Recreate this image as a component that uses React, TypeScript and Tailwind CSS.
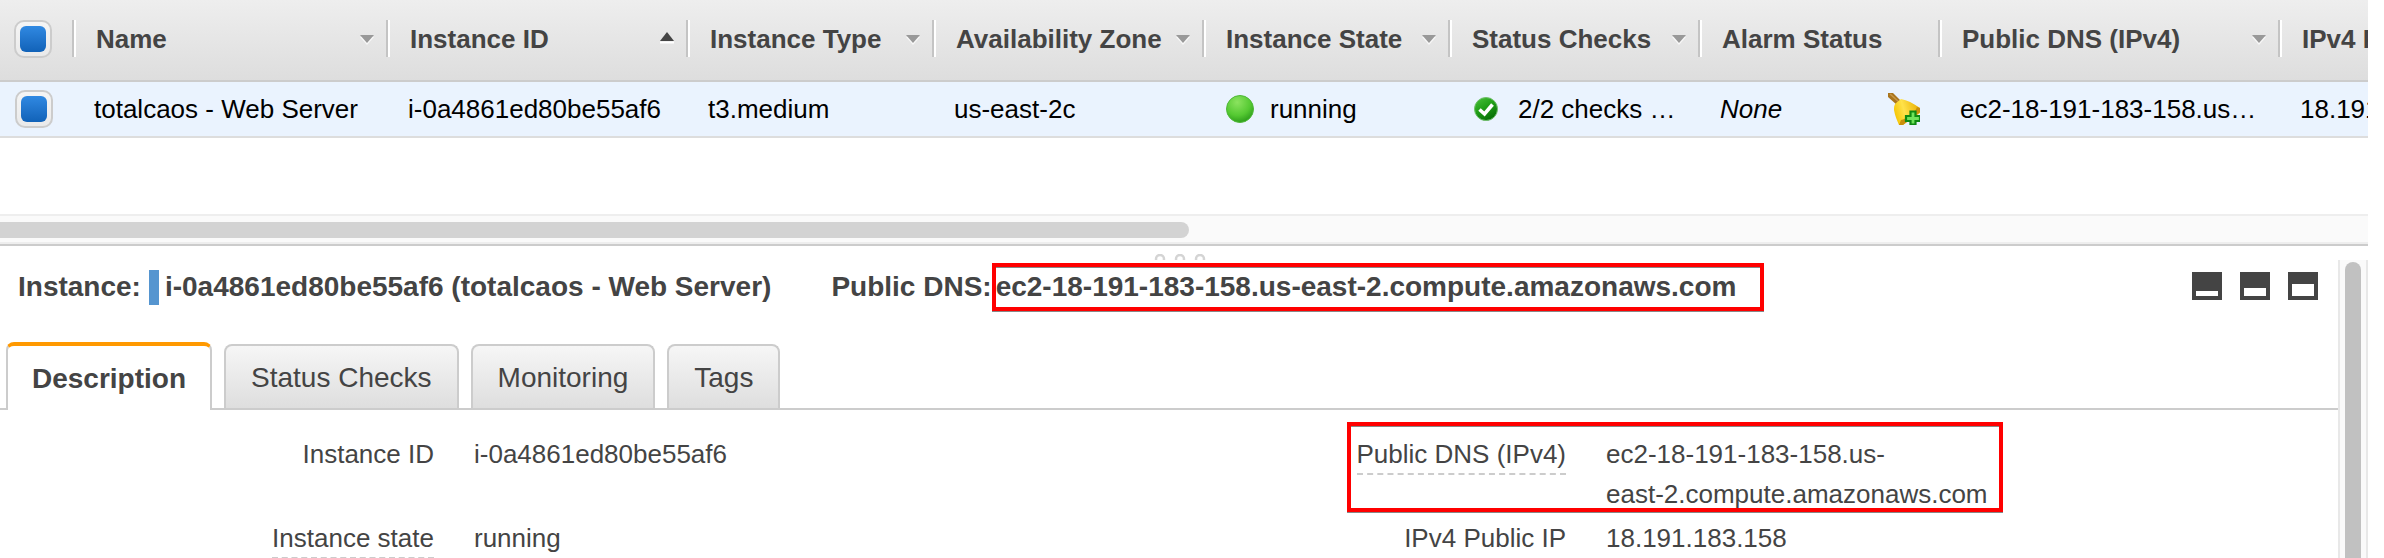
import type { ReactNode } from "react";

type SortDirection = "asc" | "none";

function SortArrow({ direction }: { direction: SortDirection }) {
  if (direction === "asc") {
    return (
      <svg width="14" height="14" viewBox="0 0 14 14" aria-hidden="true" className="shrink-0">
        <path d="M0 9.500H14V11.500H0Z" fill="#fff" />
        <path d="M7 0L14 9H0Z" fill="#444" />
      </svg>
    );
  }
  return (
    <svg width="14" height="12" viewBox="0 0 14 12" aria-hidden="true" className="shrink-0">
      <path d="M0 4H14L7 12Z" fill="#f8f8f8" />
      <path d="M0 2H14L7 10Z" fill="#999" />
    </svg>
  );
}

function Checkbox({ label }: { label: string }) {
  return (
    <input
      type="checkbox"
      defaultChecked
      aria-label={label}
      className="block size-[38px] appearance-none rounded-[10px] border-2 border-[#ccc] bg-linear-to-b from-[#f5f5f5] to-[#eaeaea] p-1 before:block before:size-[26px] before:rounded-md before:content-[''] checked:before:bg-linear-to-b checked:before:from-[#3089e2] checked:before:to-[#1162b8]"
    />
  );
}

function HeaderCell({ children, sort }: { children: ReactNode; sort?: SortDirection }) {
  return (
    <th className="h-20 overflow-hidden pt-5 text-left align-top font-bold">
      <div className="h-[37px] border-l-2 border-[#c4c4c4] shadow-[inset_2px_0_0_#fff]">
        <button
          type="button"
          className="flex h-full w-full items-center justify-between pr-3 pl-[22px] whitespace-nowrap"
        >
          <span>{children}</span>
          {sort && <SortArrow direction={sort} />}
        </button>
      </div>
    </th>
  );
}

function Cell({ children }: { children: ReactNode }) {
  return (
    <td className="overflow-hidden pb-0.5 pl-[22px] align-middle whitespace-nowrap">{children}</td>
  );
}

function RunningIcon() {
  return (
    <svg width="28" height="28" viewBox="0 0 28 28" aria-hidden="true" className="shrink-0">
      <defs>
        <radialGradient id="run" cx="0.4" cy="0.25" r="0.75">
          <stop offset="0" stopColor="#8be35f" />
          <stop offset="0.65" stopColor="#55c932" />
          <stop offset="1" stopColor="#2fa01c" />
        </radialGradient>
      </defs>
      <circle cx="14" cy="14" r="13.500" fill="url(#run)" stroke="#4fb838" strokeWidth="1" />
    </svg>
  );
}

function PassedIcon() {
  return (
    <svg width="24" height="24" viewBox="0 0 24 24" aria-hidden="true" className="shrink-0">
      <defs>
        <linearGradient id="pass" x1="0" y1="0" x2="0.6" y2="1">
          <stop offset="0" stopColor="#4cc23c" />
          <stop offset="0.5" stopColor="#22a018" />
          <stop offset="1" stopColor="#067006" />
        </linearGradient>
      </defs>
      <circle cx="12" cy="12" r="11.500" fill="url(#pass)" stroke="#6fbf6a" strokeWidth="1" />
      <path d="M5.500 12.500L10.500 17L18.500 7.500" fill="none" stroke="#fff" strokeWidth="3.600" />
    </svg>
  );
}

function AlarmBellIcon() {
  return (
    <svg width="32" height="32" viewBox="0 0 32 32" aria-hidden="true">
      <defs>
        <linearGradient id="bell" x1="0" y1="0.6" x2="1" y2="0.3">
          <stop offset="0" stopColor="#f5c400" />
          <stop offset="0.4" stopColor="#ffe24a" />
          <stop offset="1" stopColor="#e9ae00" />
        </linearGradient>
      </defs>
      <path d="M0 0H5L13 8L9 12L0 4Z" fill="#a9741c" />
      <path d="M2 1L11 9" stroke="#c8984a" strokeWidth="1.500" />
      <path d="M8 10L13 6C19 7 25 10 32 15V20L15 32H11C9 27 7 23 6 17C6 14 6 12 8 10Z" fill="url(#bell)" />
      <path d="M32 15V19L15 32H11L13 27C18 26 27 21 29 14Z" fill="#c98f0c" />
      <path
        d="M22.500 18.500H27.500V23H32V28H27.500V31.500H22.500V28H18V23H22.500Z"
        fill="#6fe35a"
        stroke="#0f8a12"
        strokeWidth="2.200"
      />
    </svg>
  );
}

function InstanceTable() {
  return (
    <table className="w-full table-fixed border-collapse">
      <colgroup>
        <col className="w-[72px]" />
        <col className="w-[314px]" />
        <col className="w-[300px]" />
        <col className="w-[246px]" />
        <col className="w-[270px]" />
        <col className="w-[246px]" />
        <col className="w-[250px]" />
        <col className="w-[240px]" />
        <col className="w-[340px]" />
        <col />
      </colgroup>
      <thead>
        <tr className="h-[82px] bg-linear-to-b from-[#eee] to-[#ddd] text-[#444] shadow-[inset_0_-2px_0_#ccc]">
          <th className="pt-5 pl-[14px] align-top">
            <Checkbox label="Select all instances" />
          </th>
          <HeaderCell sort="none">Name</HeaderCell>
          <HeaderCell sort="asc">Instance ID</HeaderCell>
          <HeaderCell sort="none">Instance Type</HeaderCell>
          <HeaderCell sort="none">Availability Zone</HeaderCell>
          <HeaderCell sort="none">Instance State</HeaderCell>
          <HeaderCell sort="none">Status Checks</HeaderCell>
          <HeaderCell>Alarm Status</HeaderCell>
          <HeaderCell sort="none">Public DNS (IPv4)</HeaderCell>
          <HeaderCell>IPv4 Public IP</HeaderCell>
        </tr>
      </thead>
      <tbody>
        <tr className="h-14 bg-[#eaf3fe] text-black shadow-[inset_0_-2px_0_#ddd]">
          <td className="pb-0.5 pl-[15px] align-middle">
            <Checkbox label="Select totalcaos - Web Server" />
          </td>
          <Cell>totalcaos - Web Server</Cell>
          <Cell>i-0a4861ed80be55af6</Cell>
          <Cell>t3.medium</Cell>
          <Cell>us-east-2c</Cell>
          <Cell>
            <span className="flex items-center gap-4 pl-0.5">
              <RunningIcon />
              running
            </span>
          </Cell>
          <Cell>
            <span className="flex items-center gap-5 pl-1">
              <PassedIcon />
              2/2 checks …
            </span>
          </Cell>
          <Cell>
            <span className="flex items-center justify-between pr-[18px]">
              <em>None</em>
              <button type="button" aria-label="Add alarm">
                <AlarmBellIcon />
              </button>
            </span>
          </Cell>
          <Cell>ec2-18-191-183-158.us…</Cell>
          <Cell>18.191.183.158</Cell>
        </tr>
      </tbody>
    </table>
  );
}

function PaneSizeButton({ label, top }: { label: string; top: number }) {
  return (
    <button type="button" aria-label={label}>
      <svg width="30" height="28" viewBox="0 0 30 28" className="block" aria-hidden="true">
        <rect width="30" height="28" fill="#444" />
        <rect x="4" y={top} width="22" height={24 - top} fill="#fff" />
      </svg>
    </button>
  );
}

function SplitterGrip() {
  return (
    <svg width="52" height="6" viewBox="0 0 52 6" aria-hidden="true">
      <g fill="none" stroke="#d4d4d4" strokeWidth="2.500">
        <circle cx="6" cy="5" r="4" />
        <circle cx="26" cy="5" r="4" />
        <circle cx="46" cy="5" r="4" />
      </g>
    </svg>
  );
}

function Tab({ children }: { children: ReactNode }) {
  return (
    <button
      type="button"
      role="tab"
      aria-selected="false"
      className="h-16 rounded-t-lg border-2 border-b-0 border-[#ccc] bg-linear-to-b from-[#f6f6f6] to-[#dedede] px-[25px] pt-0.5"
    >
      {children}
    </button>
  );
}

function Detail({
  label,
  hint,
  highlighted,
  children,
}: {
  label: string;
  hint?: boolean;
  highlighted?: boolean;
  children: ReactNode;
}) {
  return (
    <div className="relative flex gap-10">
      <dt className="flex w-[434px] shrink-0 items-start justify-end">
        <span className={hint ? "h-[41px] border-b-2 border-dashed border-[#ccc]" : ""}>{label}</span>
      </dt>
      <dd className="whitespace-nowrap">{children}</dd>
      {highlighted && (
        <div className="absolute -top-3 left-[215px] h-[90px] w-[656px] border-4 border-[#f00] shadow-[0_1px_0_#888,inset_0_1px_0_#888]" />
      )}
    </div>
  );
}

export default function App() {
  return (
    <div className="flex h-screen flex-col overflow-hidden bg-white pr-4 font-['Liberation_Sans',Arial,sans-serif] text-[26px] leading-[30px]">
      <section aria-label="Instances" className="shrink-0">
        <InstanceTable />
        <div className="mt-[76px] border-y-2 border-[#eee] bg-[#fafafa] pt-1.5 pb-1">
          <div className="h-4 w-[50.2%] rounded-r-lg bg-[#d3d3d3]" />
        </div>
      </section>

      <div className="flex h-4 shrink-0 items-end justify-center border-t-2 border-[#ccc] pr-2">
        <SplitterGrip />
      </div>

      <section aria-label="Instance details" className="flex min-h-0 flex-1 text-[#444]">
        <div className="min-w-0 flex-1 overflow-hidden">
          <header className="flex items-start justify-between pt-[3px] pr-5 pl-[18px] text-[28px]">
            <h2 className="flex h-12 items-center font-bold whitespace-nowrap">
              <span>Instance:</span>
              <span className="mr-1.5 ml-2 h-[35px] w-2.5 bg-[#5595d0]" />
              <span>i-0a4861ed80be55af6 (totalcaos - Web Server)</span>
              <span className="ml-[60px]">Public DNS:</span>
              <span className="flex h-12 items-center border-4 border-[#f00] pr-6 shadow-[0_1px_0_#888,inset_0_1px_0_#888]">
                ec2-18-191-183-158.us-east-2.compute.amazonaws.com
              </span>
            </h2>
            <div className="flex gap-[18px] pt-[9px]">
              <PaneSizeButton label="Small pane" top={19} />
              <PaneSizeButton label="Medium pane" top={16} />
              <PaneSizeButton label="Large pane" top={12} />
            </div>
          </header>

          <div
            role="tablist"
            className="mt-[31px] flex h-[68px] items-end gap-3 border-b-2 border-[#ccc] pl-1.5 text-[28px]"
          >
            <button
              type="button"
              role="tab"
              aria-selected="true"
              className="-mb-0.5 h-[68px] rounded-t-lg border-x-2 border-t-4 border-x-[#ccc] border-t-[#f90] bg-white px-6 pt-0.5 font-bold"
            >
              Description
            </button>
            <Tab>Status Checks</Tab>
            <Tab>Monitoring</Tab>
            <Tab>Tags</Tab>
          </div>

          <dl className="grid grid-cols-2 gap-y-1 pt-6 pr-[74px] leading-10">
            <Detail label="Instance ID">i-0a4861ed80be55af6</Detail>
            <Detail label="Public DNS (IPv4)" hint highlighted>
              ec2-18-191-183-158.us-
              <br />
              east-2.compute.amazonaws.com
            </Detail>
            <Detail label="Instance state" hint>
              running
            </Detail>
            <Detail label="IPv4 Public IP">18.191.183.158</Detail>
          </dl>
        </div>

        <div className="w-[30px] shrink-0 border-x-2 border-[#e8e8e8] bg-[#fafafa] px-[5px] pt-0.5">
          <div className="h-full w-4 rounded-t-lg bg-[#c1c1c1]" />
        </div>
      </section>
    </div>
  );
}
